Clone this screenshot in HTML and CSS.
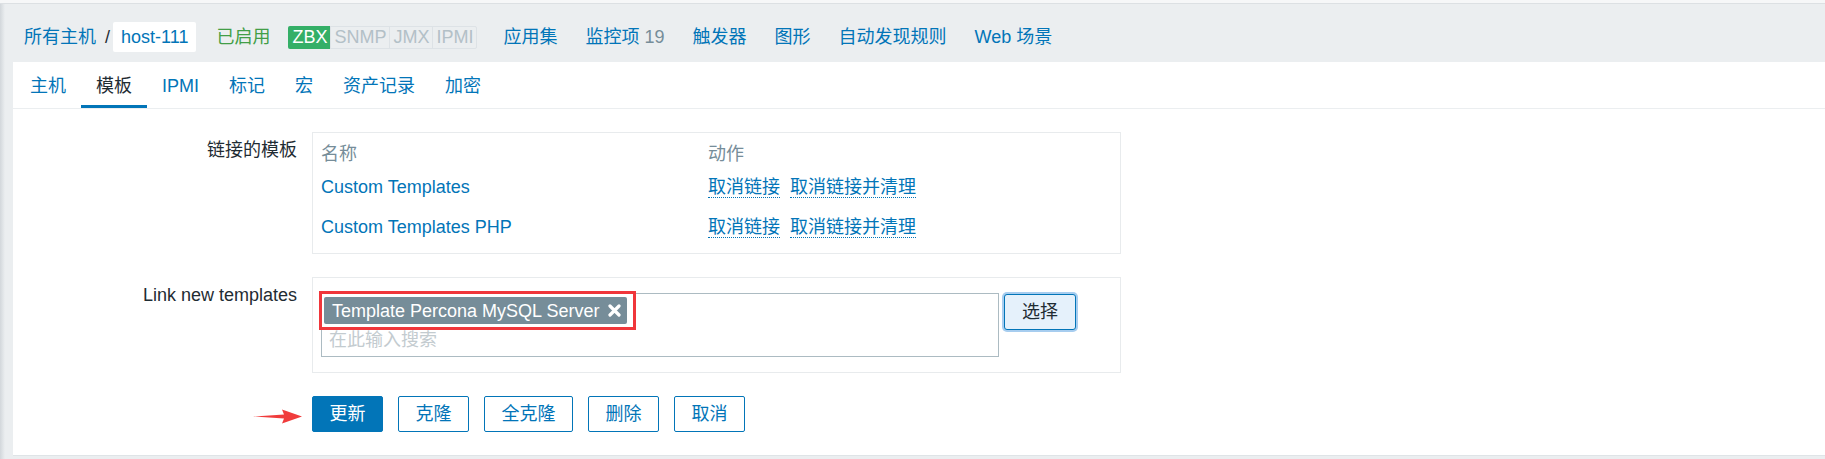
FILE: index.html
```html
<!DOCTYPE html>
<html lang="zh-CN">
<head>
    <meta charset="UTF-8">
    <meta name="viewport" content="width=device-width, initial-scale=1.0">
    <title>主机 host-111</title>
    <link rel="stylesheet" href="styles.css">
</head>
<body>
    <div class="page">
        <header class="host-nav">
            <ul class="breadcrumbs">
                <li><a href="#">所有主机</a></li>
                <li class="sep">/</li>
                <li class="current"><a href="#">host-111</a></li>
            </ul>
            <span class="status-on">已启用</span>
            <div class="avail">
                <span class="on">ZBX</span>
                <span>SNMP</span>
                <span>JMX</span>
                <span>IPMI</span>
            </div>
            <nav class="host-links">
                <a href="#">应用集</a>
                <a href="#">监控项 <span class="count">19</span></a>
                <a href="#">触发器</a>
                <a href="#">图形</a>
                <a href="#">自动发现规则</a>
                <a href="#">Web 场景</a>
            </nav>
        </header>

        <div class="panel">
            <ul class="tabs">
                <li><a href="#">主机</a></li>
                <li class="active"><a href="#">模板</a></li>
                <li><a href="#">IPMI</a></li>
                <li><a href="#">标记</a></li>
                <li><a href="#">宏</a></li>
                <li><a href="#">资产记录</a></li>
                <li><a href="#">加密</a></li>
            </ul>

            <form class="form">
                <div class="form-row">
                    <label class="form-label">链接的模板</label>
                    <div class="form-box linked">
                        <table class="linked-table">
                            <thead>
                                <tr>
                                    <th class="col-name">名称</th>
                                    <th>动作</th>
                                </tr>
                            </thead>
                            <tbody>
                                <tr>
                                    <td><a href="#">Custom Templates</a></td>
                                    <td>
                                        <a href="#" class="action">取消链接</a>
                                        <a href="#" class="action">取消链接并清理</a>
                                    </td>
                                </tr>
                                <tr>
                                    <td><a href="#">Custom Templates PHP</a></td>
                                    <td>
                                        <a href="#" class="action">取消链接</a>
                                        <a href="#" class="action">取消链接并清理</a>
                                    </td>
                                </tr>
                            </tbody>
                        </table>
                    </div>
                </div>

                <div class="form-row">
                    <label class="form-label">Link new templates</label>
                    <div class="form-box new-link">
                        <div class="multiselect">
                            <div class="selected">
                                <span class="tag">Template Percona MySQL Server
                                    <svg class="tag-x" width="13" height="13" viewBox="0 0 13 13">
                                        <path d="M2 2 L11 11 M11 2 L2 11" stroke="#fff" stroke-width="3.2" stroke-linecap="round"/>
                                    </svg>
                                </span>
                            </div>
                            <input type="text" class="search" placeholder="在此输入搜索">
                            <span class="mark"></span>
                        </div>
                        <button type="button" class="btn-select">选择</button>
                    </div>
                </div>

                <div class="form-actions">
                    <svg class="arrow" width="49" height="15" viewBox="0 0 49 15">
                        <polygon points="0,7.5 31,5.6 29,0.5 49,7.5 29,14.5 31,9.4" fill="#f03c3c"/>
                    </svg>
                    <button type="button" class="btn primary">更新</button>
                    <button type="button" class="btn">克隆</button>
                    <button type="button" class="btn">全克隆</button>
                    <button type="button" class="btn">删除</button>
                    <button type="button" class="btn">取消</button>
                </div>
            </form>
        </div>
    </div>
</body>
</html>
```

FILE: styles.css
```css
html, body {
    margin: 0;
    height: 100%;
}
body {
    font-family: "Liberation Sans", Arial, "Noto Sans CJK SC", sans-serif;
    font-size: 18px;
    line-height: 20px;
    color: #1f2c33;
    background-color: #f6f7f8;
}
a {
    color: #0275b8;
    text-decoration: none;
}
ul {
    list-style: none;
    margin: 0;
    padding: 0;
}

.page {
    margin-top: 3px;
    min-height: calc(100% - 3px);
    border-top: 1px solid #dce0e3;
    background: linear-gradient(to right, #d2d7db, #ebeef0 5px) #ebeef0;
    box-sizing: border-box;
}

/* host header */
.host-nav {
    display: flex;
    align-items: center;
    padding: 18px 0 10px 24px;
}
.breadcrumbs {
    display: flex;
    align-items: center;
}
.breadcrumbs .sep {
    margin: 0 3px 0 9px;
    color: #1f2c33;
}
.breadcrumbs .current a {
    display: block;
    height: 30px;
    line-height: 30px;
    padding: 0 8px;
    background-color: #fff;
    border-radius: 2px;
}
.status-on {
    margin-left: 20px;
    color: #429e47;
}
.avail {
    display: flex;
    margin-left: 18px;
    height: 23px;
    border: 1px solid #dde2e6;
    border-radius: 2px;
    box-sizing: border-box;
    background-color: #ebeef0;
}
.avail span {
    padding: 0 3px;
    line-height: 21px;
    color: #b3c0c7;
    border-left: 1px solid #dde2e6;
}
.avail span.on {
    border-left: none;
    margin: -1px 0 -1px -1px;
    line-height: 23px;
    padding: 0 3px 0 4px;
    background-color: #34af67;
    color: #fff;
    border-radius: 2px 0 0 2px;
}
.host-links {
    display: flex;
    gap: 28px;
    margin-left: 26px;
}
.host-links .count {
    color: #768d99;
}

/* white panel */
.panel {
    margin-left: 13px;
    padding-bottom: 23px;
    background-color: #fff;
    border-bottom: 1px solid #dfe4e7;
}
.tabs {
    display: flex;
    padding-left: 2px;
    border-bottom: 1px solid #ebeef0;
}
.tabs a {
    display: block;
    padding: 14px 15px 9px;
    border-bottom: 3px solid transparent;
}
.tabs .active a {
    color: #1f2c33;
    border-bottom-color: #0275b8;
}

/* form */
.form {
    padding-top: 23px;
}
.form-row {
    display: grid;
    grid-template-columns: 284px 809px;
    column-gap: 15px;
    margin-bottom: 23px;
}
.form-label {
    text-align: right;
    padding-top: 8px;
}
.form-box {
    border: 1px solid #e8ebed;
    box-sizing: border-box;
}
.linked {
    padding: 8px 8px 6px;
}
.linked-table {
    width: 100%;
    border-collapse: collapse;
}
.linked-table th {
    height: 26px;
    padding: 0;
    text-align: left;
    font-weight: normal;
    color: #768d99;
}
.linked-table .col-name {
    width: 387px;
}
.linked-table td {
    height: 40px;
    padding: 0;
    vertical-align: middle;
}
.action {
    display: inline-block;
    line-height: 20px;
    border-bottom: 1px dotted #0275b8;
    margin-right: 5px;
}

.new-link {
    display: flex;
    align-items: flex-start;
    padding: 15px 8px;
}
.multiselect {
    position: relative;
    width: 678px;
    padding: 3px 2px 4px;
    border: 1px solid #acbbc2;
    box-sizing: border-box;
}
.tag {
    display: inline-flex;
    align-items: center;
    gap: 9px;
    height: 27px;
    padding: 0 6px 0 8px;
    background-color: #768d99;
    color: #fff;
    border-radius: 2px;
}
.search {
    display: block;
    width: 100%;
    height: 24px;
    margin-top: 4px;
    padding: 0 5px;
    border: none;
    outline: none;
    font: inherit;
    color: #1f2c33;
    box-sizing: border-box;
}
.search::placeholder {
    color: #c3cbcf;
}
.mark {
    position: absolute;
    left: -3px;
    top: -3px;
    width: 317px;
    height: 39px;
    border: 3px solid #f0363b;
    box-sizing: border-box;
}
.btn-select {
    margin: 1px 0 0 5px;
    height: 36px;
    padding: 0 17px;
    font: inherit;
    color: #1f2c33;
    background-color: #e5f1fb;
    border: 1px solid #0275b8;
    border-radius: 3px;
    box-shadow: 0 0 0 2px #a7cdef;
}

.form-actions {
    position: relative;
    display: flex;
    gap: 15px;
    margin-left: 299px;
}
.btn {
    height: 36px;
    padding: 0 16.5px;
    font: inherit;
    color: #0275b8;
    background-color: #fff;
    border: 1px solid #0275b8;
    border-radius: 2px;
}
.btn.primary {
    color: #fff;
    background-color: #0275b8;
}
.arrow {
    position: absolute;
    left: -59px;
    top: 13px;
}
```
